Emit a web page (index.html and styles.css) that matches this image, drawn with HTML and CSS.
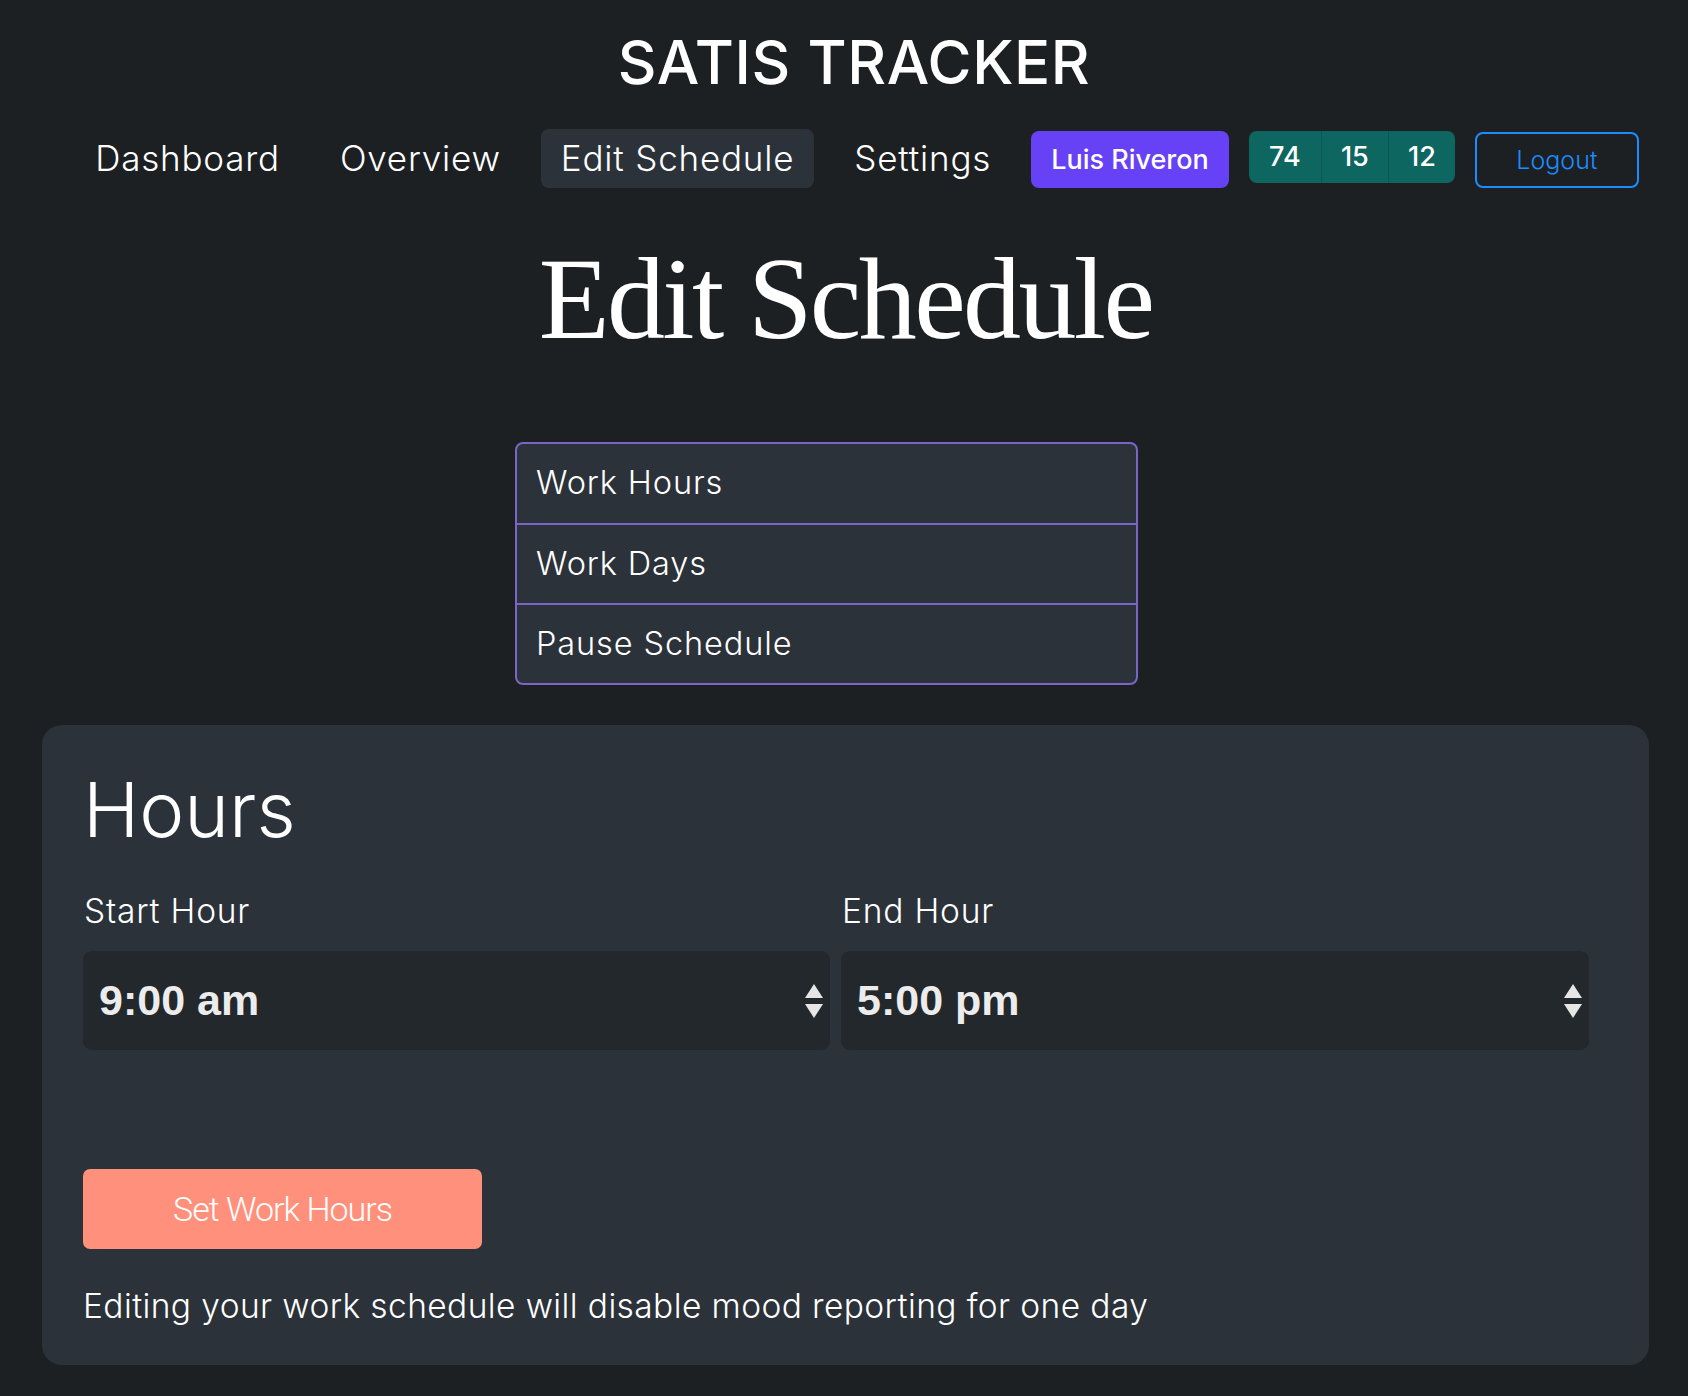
FILE: index.html
```html
<!DOCTYPE html>
<html lang="en">
<head>
<meta charset="utf-8">
<title>Satis Tracker - Edit Schedule</title>
<link rel="stylesheet" href="styles.css">
</head>
<body>
<header class="top">
  <h1 class="brand">SATIS TRACKER</h1>
  <nav class="nav">
    <a class="nav-link" href="#">Dashboard</a>
    <a class="nav-link" href="#">Overview</a>
    <a class="nav-link active" href="#">Edit Schedule</a>
    <a class="nav-link" href="#">Settings</a>
    <span class="user-btn">Luis Riveron</span>
    <span class="stats">
      <span class="stat">74</span>
      <span class="stat">15</span>
      <span class="stat">12</span>
    </span>
    <a class="logout" href="#">Logout</a>
  </nav>
</header>

<main class="page">
  <h2 class="page-title">Edit Schedule</h2>

  <ul class="menu">
    <li class="menu-item">Work Hours</li>
    <li class="menu-item">Work Days</li>
    <li class="menu-item">Pause Schedule</li>
  </ul>

  <section class="card">
    <h3 class="card-title">Hours</h3>
    <div class="fields">
      <div class="field">
        <label class="field-label">Start Hour</label>
        <div class="select">
          <span class="select-value">9:00 am</span>
          <svg class="arrows" width="20" height="38" viewBox="0 0 20 38"><path d="M10 2 L19 16 L1 16 Z" fill="#e6e6e6"/><path d="M1 22 L19 22 L10 36 Z" fill="#e6e6e6"/></svg>
        </div>
      </div>
      <div class="field">
        <label class="field-label">End Hour</label>
        <div class="select">
          <span class="select-value">5:00 pm</span>
          <svg class="arrows" width="20" height="38" viewBox="0 0 20 38"><path d="M10 2 L19 16 L1 16 Z" fill="#e6e6e6"/><path d="M1 22 L19 22 L10 36 Z" fill="#e6e6e6"/></svg>
        </div>
      </div>
    </div>
    <button class="submit" type="button">Set Work Hours</button>
    <p class="note">Editing your work schedule will disable mood reporting for one day</p>
  </section>
</main>
</body>
</html>
```

FILE: styles.css
```css
* { box-sizing: border-box; }

body {
  margin: 0;
  background: #1c2023;
  color: #ffffff;
  font-family: "Inter", "Noto Sans", sans-serif;
  font-weight: 300;
}

.top {
  display: flex;
  flex-direction: column;
  align-items: center;
}

.brand {
  margin: 26px 0 0 0;
  font-size: 60px;
  line-height: 72px;
  font-weight: 500;
  letter-spacing: 0.6px;
  padding-left: 20px;
}

.nav {
  display: flex;
  align-items: center;
  gap: 20px;
  margin-top: 31px;
  padding-left: 26px;
}

.nav-link {
  color: #ffffff;
  text-decoration: none;
  font-size: 35px;
  letter-spacing: 0.8px;
  font-weight: 300;
  padding: 8px 20px;
  line-height: 43px;
  border-radius: 8px;
}

.nav-link.active {
  background: #2c323a;
}

.user-btn {
  background: #6741f5;
  color: #fff;
  font-weight: 500;
  font-size: 27px;
  height: 57px;
  line-height: 57px;
  padding: 0 20px;
  border-radius: 8px;
  margin-top: 2px;
}

.stats {
  display: flex;
  background: #0e6661;
  border-radius: 8px;
  height: 52px;
  margin-top: -3px;
  overflow: hidden;
}

.stat {
  width: 67px;
  text-align: center;
  line-height: 52px;
  font-size: 27px;
  font-weight: 500;
  border-left: 1px solid #0b5853;
}

.stat:first-child { width: 72px; border-left: none; }

.logout {
  color: #1c8cff;
  text-decoration: none;
  border: 2px solid #1c8cff;
  border-radius: 8px;
  width: 164px;
  height: 56px;
  line-height: 52px;
  text-align: center;
  font-size: 25px;
  font-weight: 300;
  margin-top: 2px;
}

.page {
  padding: 0 39px 0 42px;
}

.page-title {
  margin: 46px 0 0 0;
  text-align: center;
  font-family: "Liberation Serif", "DejaVu Serif", serif;
  font-weight: 400;
  font-size: 116px;
  line-height: 130px;
  letter-spacing: -2.6px;
}

.menu {
  list-style: none;
  margin: 78px 0 0 473px;
  padding: 0;
  width: 623px;
  border: 2px solid #7b65c6;
  border-radius: 8px;
  background: #2c323a;
  overflow: hidden;
}

.menu-item {
  height: 80px;
  line-height: 78px;
  padding: 0 19px;
  font-size: 32.5px;
  letter-spacing: 0.9px;
  font-weight: 300;
  border-top: 2px solid #7b65c6;
}

.menu-item:first-child { border-top: none; height: 79px; }

.card {
  margin-top: 40px;
  background: #2c323a;
  border-radius: 20px;
  padding: 38px 41px 30px 41px;
  height: 640px;
}

.card-title {
  margin: 0;
  font-size: 76px;
  line-height: 92px;
  font-weight: 300;
}

.fields {
  display: grid;
  grid-template-columns: 747px 748px;
  column-gap: 11px;
  margin-top: 36px;
}

.field-label {
  display: block;
  font-size: 33.5px;
  letter-spacing: 0.8px;
  line-height: 40px;
  font-weight: 300;
  margin-bottom: 20px;
  padding-left: 1px;
}

.select {
  display: flex;
  align-items: center;
  justify-content: space-between;
  height: 99px;
  background: #22282b;
  border-radius: 9px;
  padding: 0 6px 0 16px;
}

.select-value {
  font-family: "Liberation Sans", Arial, sans-serif;
  font-weight: 700;
  font-size: 43px;
  color: #ececec;
}

.arrows { display: block; }

.submit {
  display: block;
  margin-top: 119px;
  width: 399px;
  height: 80px;
  border: none;
  border-radius: 7px;
  background: #ff907c;
  color: #ffffff;
  font-family: "Roboto", sans-serif;
  font-weight: 300;
  font-size: 34px;
  letter-spacing: -1px;
}

.note {
  margin: 37px 0 0 0;
  font-size: 33.5px;
  letter-spacing: 0.4px;
  line-height: 40px;
  font-weight: 300;
}
```
